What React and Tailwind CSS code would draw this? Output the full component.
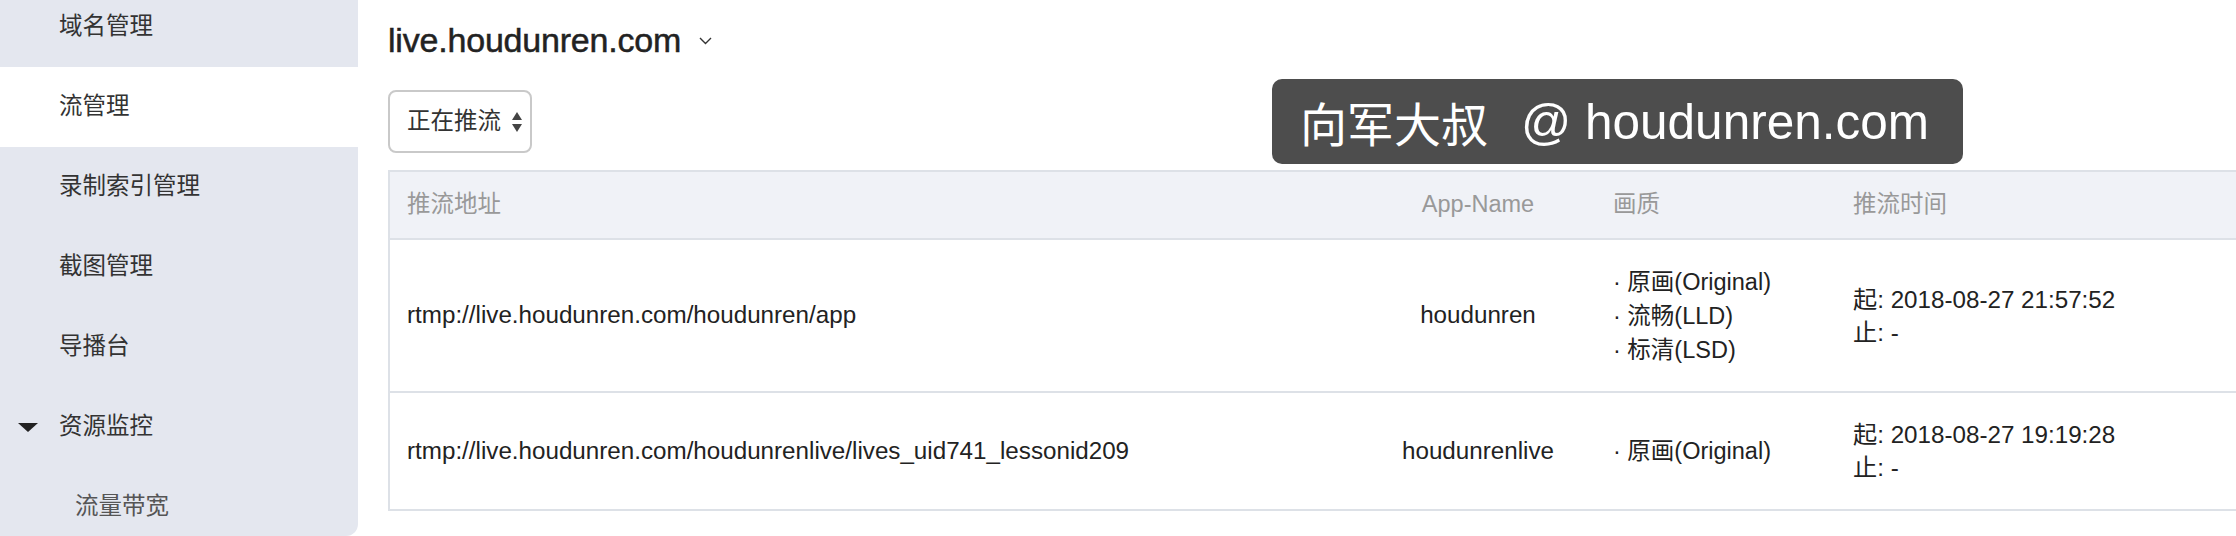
import React from "react";

const FONT = "font-['Liberation_Sans','Noto_Sans_CJK_SC',sans-serif]";

function SideItem({ label, active, sub, caret }) {
  return (
    <div
      className={`relative h-[80px] flex items-center ${sub ? "pl-[75px] text-[#555]" : "pl-[59px] text-[#333]"} text-[23.5px] ${active ? "bg-white" : ""}`}
    >
      {caret && (
        <svg className="absolute left-[18px] top-[36px]" width="20" height="9" viewBox="0 0 20 9">
          <path d="M0 0 L20 0 L10 9 Z" fill="#222" />
        </svg>
      )}
      {label}
    </div>
  );
}

function Quality({ items }) {
  return (
    <div className="flex flex-col">
      {items.map((q) => (
        <div key={q} className="leading-[34px]">
          · {q}
        </div>
      ))}
    </div>
  );
}

const rows = [
  {
    url: "rtmp://live.houdunren.com/houdunren/app",
    app: "houdunren",
    q: ["原画(Original)", "流畅(LLD)", "标清(LSD)"],
    start: "2018-08-27 21:57:52",
    h: "h-[151px]",
  },
  {
    url: "rtmp://live.houdunren.com/houdunrenlive/lives_uid741_lessonid209",
    app: "houdunrenlive",
    q: ["原画(Original)"],
    start: "2018-08-27 19:19:28",
    h: "h-[116px]",
  },
];

export default function App() {
  return (
    <div className={`flex w-[2236px] h-[536px] overflow-hidden bg-white ${FONT}`}>
      <aside className="w-[358px] shrink-0 h-[536px] bg-[#e4e7ef] rounded-br-[12px] overflow-hidden">
        <div className="-mt-[13px]">
          <SideItem label="域名管理" />
          <SideItem label="流管理" active />
          <SideItem label="录制索引管理" />
          <SideItem label="截图管理" />
          <SideItem label="导播台" />
          <SideItem label="资源监控" caret />
          <SideItem label="流量带宽" sub />
        </div>
      </aside>

      <main className="relative flex-1 pl-[30px] overflow-hidden">
        <div className="h-[80px] flex items-center gap-[18px]">
          <span className="text-[34px] text-[#222] [-webkit-text-stroke:0.5px_#222] tracking-[-0.2px]">
            live.houdunren.com
          </span>
          <svg width="13" height="8" viewBox="0 0 13 8" className="mt-[2px]">
            <path d="M1 1 L6.5 6.5 L12 1" fill="none" stroke="#333" strokeWidth="1.4" />
          </svg>
        </div>

        <div className="mt-[10px] w-[144px] h-[63px] border-2 border-[#c9c9c9] rounded-[8px] flex items-center pl-[17px] gap-[11px] text-[23.5px] text-[#333]">
          <span>正在推流</span>
          <svg width="10" height="20" viewBox="0 0 10 20">
            <path d="M5 0 L10 8 L0 8 Z" fill="#444" />
            <path d="M0 12 L10 12 L5 20 Z" fill="#444" />
          </svg>
        </div>

        <div className="mt-[17px] w-[1900px] border-l-2 border-t-2 border-[#dde1e7] text-[24.2px]">
          <div className="grid grid-cols-[988px_200px_240px_1fr] h-[68px] items-center bg-[#f0f2f7] border-b-2 border-[#dde1e7] text-[#999] text-[23.5px]">
            <div className="pl-[17px]">推流地址</div>
            <div className="text-center">App-Name</div>
            <div className="pl-[35px]">画质</div>
            <div className="pl-[35px]">推流时间</div>
          </div>
          {rows.map((r) => (
            <div
              key={r.url}
              className={`grid grid-cols-[988px_200px_240px_1fr] ${r.h} box-content items-center border-b-2 border-[#dde1e7] text-[#222]`}
            >
              <div className="pl-[17px]">{r.url}</div>
              <div className="text-center">{r.app}</div>
              <div className="pl-[35px] text-[23.5px]">
                <Quality items={r.q} />
              </div>
              <div className="pl-[35px] flex flex-col">
                <div className="leading-[33px]">起: {r.start}</div>
                <div className="leading-[33px]">止: -</div>
              </div>
            </div>
          ))}
        </div>

        <div className="absolute left-[914px] top-[79px] w-[691px] h-[85px] rounded-[10px] bg-[#4d4d4d] text-white flex items-center pl-[28px]">
          <span className="text-[47px] font-['Noto_Sans_CJK_SC',sans-serif] leading-none">向军大叔</span>
          <span className="ml-[33px] text-[49.5px] leading-none font-['Liberation_Sans',sans-serif]">@ houdunren.com</span>
        </div>
      </main>
    </div>
  );
}
